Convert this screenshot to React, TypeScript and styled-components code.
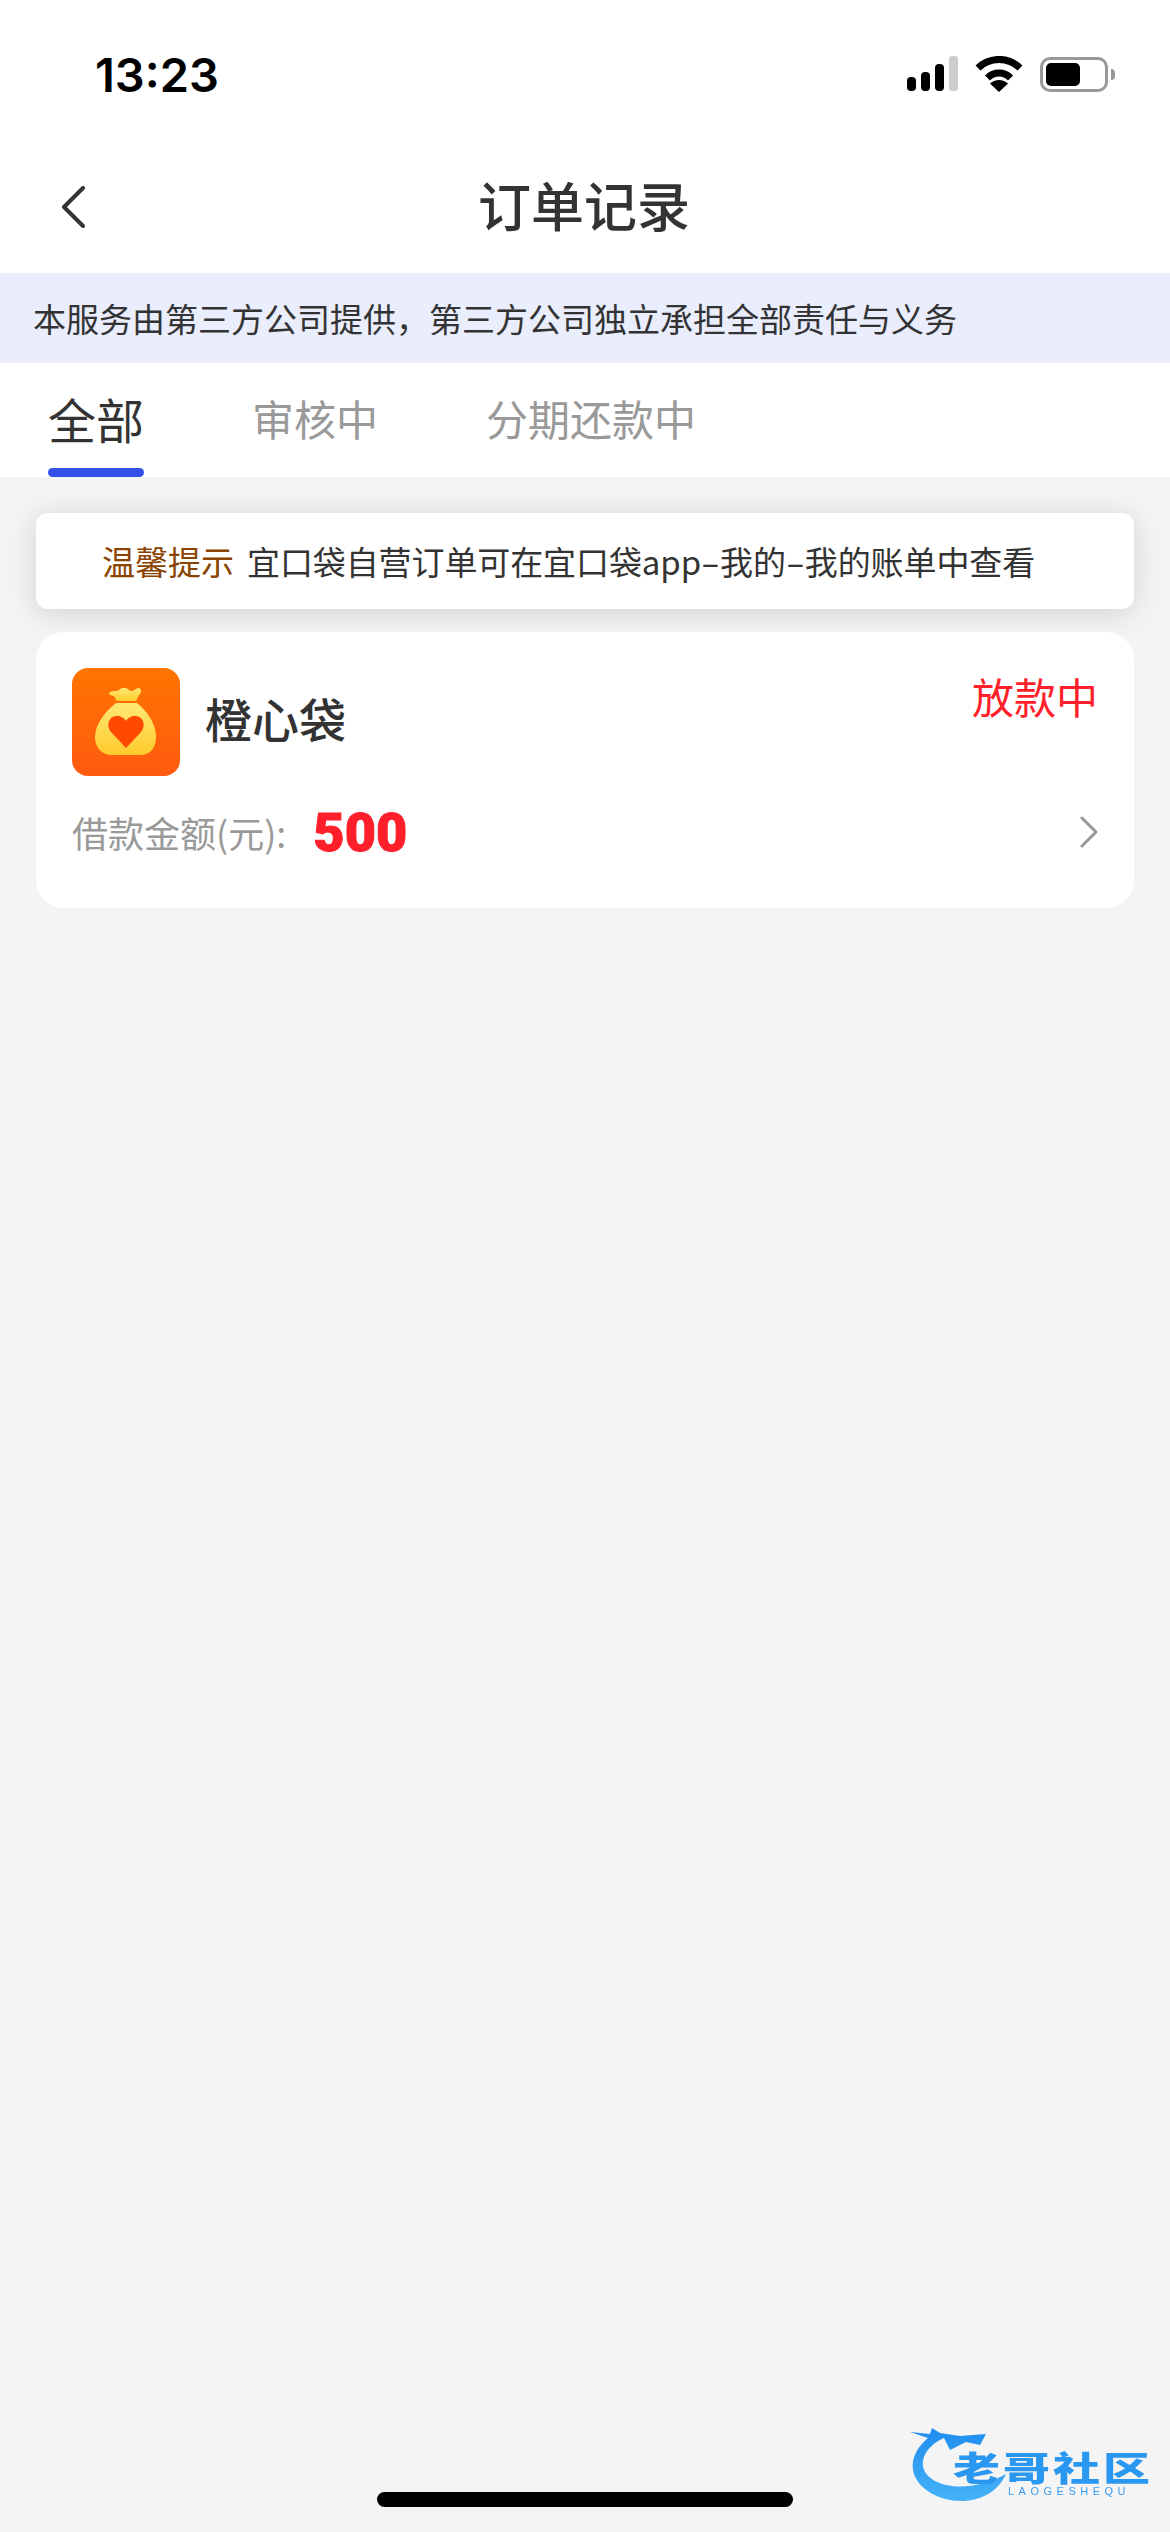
import styled, { createGlobalStyle } from "styled-components";

const CJK = `"Noto Sans CJK SC", "Noto Sans", sans-serif`;

const GlobalStyle = createGlobalStyle`
  html, body {
    margin: 0;
    padding: 0;
    background: #f4f4f4;
  }
  * {
    box-sizing: border-box;
  }
`;

const tabs = ["全部", "审核中", "分期还款中"];

const App = () => {
  return (
    <Page>
      <GlobalStyle />
      <StatusBar>
        <Clock>13:23</Clock>
        <StatusIcons>
          <svg width="51" height="36" viewBox="0 0 51 36">
            <rect x="0" y="21" width="9" height="14" rx="4" fill="#000" />
            <rect x="14" y="16" width="9" height="19" rx="4" fill="#000" />
            <rect x="28" y="8" width="9" height="27" rx="4" fill="#000" />
            <rect x="42" y="0" width="9" height="35" rx="3" fill="#cdcdcd" />
          </svg>
          <svg width="48" height="36" viewBox="0 0 48 36">
            <path d="M3 12 A 30 30 0 0 1 45 12" fill="none" stroke="#000" strokeWidth="7" />
            <path d="M12.5 22 A 16 16 0 0 1 35.5 22" fill="none" stroke="#000" strokeWidth="7" />
            <path d="M24 36 L15 27.5 A 13 13 0 0 1 33 27.5 Z" fill="#000" />
          </svg>
          <Battery>
            <BatteryFill />
          </Battery>
        </StatusIcons>
      </StatusBar>

      <NavBar>
        <BackButton>
          <svg width="26" height="42" viewBox="0 0 26 42">
            <path d="M23 2 L4 21 L23 40" fill="none" stroke="#333" strokeWidth="4" strokeLinecap="round" strokeLinejoin="round" />
          </svg>
        </BackButton>
        <Title>订单记录</Title>
      </NavBar>

      <Banner>本服务由第三方公司提供，第三方公司独立承担全部责任与义务</Banner>

      <TabBar>
        {tabs.map((t, i) => (
          <Tab key={t}>
            <TabLabel $active={i === 0}>{t}</TabLabel>
            <TabIndicator $active={i === 0} />
          </Tab>
        ))}
      </TabBar>

      <Content>
        <Notice>
          <NoticeLabel>温馨提示</NoticeLabel>
          <NoticeText>
            宜口袋自营订单可在宜口袋app<Dash>-</Dash>我的<Dash>-</Dash>我的账单中查看
          </NoticeText>
        </Notice>

        <OrderCard>
          <CardHead>
            <Product>
              <svg width="108" height="108" viewBox="0 0 108 108">
                <defs>
                  <linearGradient id="bg" x1="0" y1="0" x2="0" y2="1">
                    <stop offset="0" stopColor="#ff7500" />
                    <stop offset="1" stopColor="#ff5a10" />
                  </linearGradient>
                  <linearGradient id="bag" x1="0" y1="0" x2="0" y2="1">
                    <stop offset="0" stopColor="#ffe975" />
                    <stop offset="1" stopColor="#ffca2c" />
                  </linearGradient>
                </defs>
                <rect width="108" height="108" rx="16" fill="url(#bg)" />
                <path d="M37 25 C40 22 44 24 47 22 C50 19 54 19 57 22 C60 25 63 21 66 20 C70 20 70 25 67 27 L64 33 L45 33 L42 28 C40 28 37 27 37 25 Z" fill="url(#bag)" />
                <path d="M44 35 L65 35 C76 44 84 56 84 69 C84 80 78 87 68 87 L40 87 C30 87 23 80 23 69 C23 56 33 44 44 35 Z" fill="url(#bag)" />
                <path d="M54 80 L39 64 C34 58 36 49 44 48 C49 47.5 52 50 54 53 C56 50 59 47.5 64 48 C72 49 74 58 69 64 Z" fill="#ff4800" />
              </svg>
              <ProductName>橙心袋</ProductName>
            </Product>
            <OrderStatus>放款中</OrderStatus>
          </CardHead>
          <AmountRow>
            <AmountLabel>借款金额(元):</AmountLabel>
            <Amount>500</Amount>
            <Arrow>
              <svg width="20" height="32" viewBox="0 0 20 32">
                <path d="M3 2 L17 16 L3 30" fill="none" stroke="#999" strokeWidth="3" strokeLinecap="round" strokeLinejoin="round" />
              </svg>
            </Arrow>
          </AmountRow>
        </OrderCard>
      </Content>

      <Watermark>
        <svg width="290" height="132" viewBox="0 0 290 132">
          <defs>
            <linearGradient id="wm" x1="0" y1="0" x2="0" y2="1">
              <stop offset="0" stopColor="#1f8df0" />
              <stop offset="1" stopColor="#45b2f8" />
            </linearGradient>
          </defs>
          <path d="M30 32 L50 34 L52 28 L60 33 L80 36 L106 34 L100 45 L86 42 L70 50 L64 38 C46 46 40 60 44 70 C52 88 90 94 126 74 C118 92 100 101 82 101 C58 101 36 88 33 70 C31 58 38 46 48 38 Z" fill="url(#wm)" />
        </svg>
        <WatermarkName>老哥社区</WatermarkName>
        <WatermarkSub>LAOGESHEQU</WatermarkSub>
      </Watermark>
      <HomeIndicator />
    </Page>
  );
};

const Page = styled.div`
  position: relative;
  width: 1170px;
  height: 2532px;
  overflow: hidden;
  background: #f4f4f4;
  font-family: ${CJK};
  color: #333;
`;

const StatusBar = styled.div`
  height: 148px;
  padding: 0 55px 0 95px;
  display: flex;
  align-items: center;
  justify-content: space-between;
  background: #fff;
`;

const Clock = styled.span`
  font-family: Inter, "Liberation Sans", sans-serif;
  font-size: 47px;
  font-weight: 600;
  color: #000;
`;

const StatusIcons = styled.div`
  display: flex;
  align-items: center;
  gap: 17px;
`;

const Battery = styled.div`
  position: relative;
  width: 68px;
  height: 35px;
  border: 3px solid #999;
  border-radius: 10px;
  padding: 3px;
  margin-right: 7px;
  &::after {
    content: "";
    position: absolute;
    right: -10px;
    top: 9px;
    width: 4px;
    height: 11px;
    border-radius: 0 4px 4px 0;
    background: #999;
  }
`;

const BatteryFill = styled.div`
  width: 34px;
  height: 100%;
  border-radius: 5px;
  background: #000;
`;

const NavBar = styled.div`
  height: 125px;
  padding-bottom: 14px;
  position: relative;
  display: flex;
  align-items: center;
  justify-content: center;
  background: #fff;
`;

const BackButton = styled.div`
  position: absolute;
  left: 60px;
  top: 38px;
  line-height: 0;
`;

const Title = styled.h1`
  margin: 0 2px 0 0;
  font-size: 53px;
  font-weight: 500;
  color: #333;
`;

const Banner = styled.div`
  height: 90px;
  padding-left: 33px;
  display: flex;
  align-items: center;
  background: #e9edfc;
  font-size: 33px;
  color: #333;
`;

const TabBar = styled.div`
  height: 114px;
  padding-left: 48px;
  display: flex;
  gap: 108px;
  background: #fff;
`;

const Tab = styled.div`
  display: flex;
  flex-direction: column;
`;

const TabLabel = styled.div<{ $active: boolean }>`
  flex: 1;
  display: flex;
  align-items: center;
  padding-top: 4px;
  font-size: ${(p) => (p.$active ? "48px" : "42px")};
  color: ${(p) => (p.$active ? "#333" : "#999")};
`;

const TabIndicator = styled.div<{ $active: boolean }>`
  height: 9px;
  border-radius: 5px;
  background: ${(p) => (p.$active ? "#3450ea" : "transparent")};
`;

const Content = styled.div`
  padding: 36px 36px 0;
  display: flex;
  flex-direction: column;
  gap: 23px;
`;

const Notice = styled.div`
  height: 96px;
  padding-left: 66px;
  display: flex;
  align-items: center;
  gap: 13px;
  border-radius: 12px;
  background: #fff;
  box-shadow: 0 4px 30px rgba(0, 0, 0, 0.14);
  font-size: 33px;
  color: #333;
`;

const NoticeLabel = styled.span`
  color: #8a4300;
`;

const NoticeText = styled.span`
  letter-spacing: -0.1px;
`;

const Dash = styled.span`
  display: inline-block;
  width: 19px;
  text-align: center;
  transform: scaleX(1.7);
`;

const OrderCard = styled.div`
  height: 276px;
  padding: 36px;
  border-radius: 28px;
  background: #fff;
`;

const CardHead = styled.div`
  display: flex;
  justify-content: space-between;
  align-items: flex-start;
`;

const Product = styled.div`
  display: flex;
  align-items: center;
  gap: 25px;
`;

const ProductName = styled.span`
  padding-bottom: 10px;
  font-size: 47px;
  font-weight: 500;
  color: #333;
`;

const OrderStatus = styled.span`
  margin-top: -2px;
  font-size: 42px;
  line-height: 60px;
  color: #ff1f2b;
`;

const AmountRow = styled.div`
  margin-top: 22px;
  display: flex;
  align-items: center;
  height: 68px;
`;

const AmountLabel = styled.span`
  font-size: 36px;
  color: #999;
`;

const Amount = styled.span`
  margin-left: 27px;
  font-family: Roboto, "Liberation Sans", sans-serif;
  font-size: 54px;
  font-weight: 900;
  color: #ff1f2b;
  -webkit-text-stroke: 1px #ff1f2b;
`;

const Arrow = styled.div`
  margin: 0 -1px 0 auto;
  line-height: 0;
`;

const Watermark = styled.div`
  position: absolute;
  left: 880px;
  top: 2400px;
  width: 290px;
  height: 132px;
  filter: blur(0.7px);
`;

const WatermarkName = styled.div`
  position: absolute;
  left: 73px;
  top: 50px;
  width: 200px;
  font-size: 47px;
  line-height: 34px;
  font-weight: 900;
  letter-spacing: 3px;
  white-space: nowrap;
  color: #2a97f0;
  transform: scaleY(0.72);
`;

const WatermarkSub = styled.div`
  position: absolute;
  left: 128px;
  top: 85px;
  font-family: "Liberation Sans", sans-serif;
  font-size: 11px;
  line-height: 12px;
  letter-spacing: 4.5px;
  white-space: nowrap;
  color: #3a9df0;
`;

const HomeIndicator = styled.div`
  position: absolute;
  left: 377px;
  top: 2492px;
  width: 416px;
  height: 15px;
  border-radius: 8px;
  background: #000;
`;

export default App;
